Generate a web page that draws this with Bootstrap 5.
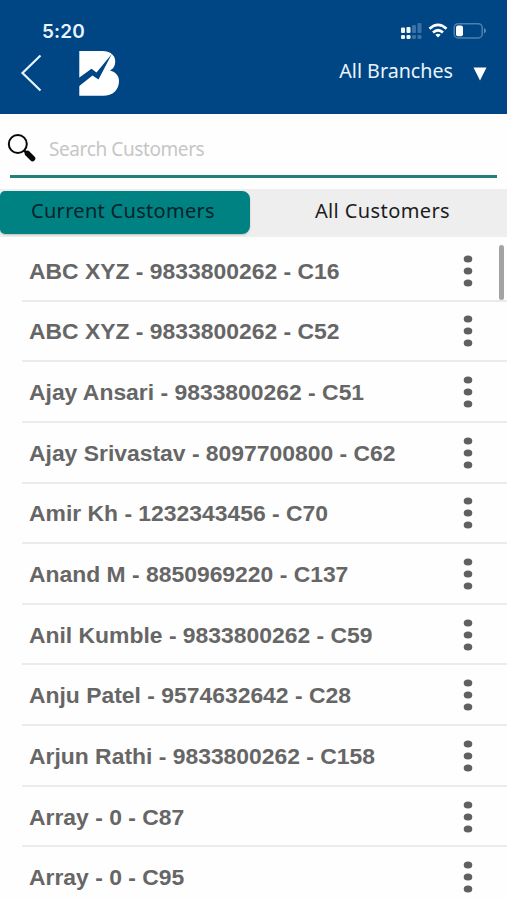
<!DOCTYPE html>
<html lang="en">
<head>
<meta charset="utf-8">
<meta name="viewport" content="width=device-width, initial-scale=1">
<title>Customers</title>
<link href="https://cdn.jsdelivr.net/npm/bootstrap@5.3.0/dist/css/bootstrap.min.css" rel="stylesheet">
<style>
body{font-family:"Noto Sans","Open Sans",sans-serif;background:#fefefe;height:900px;overflow:hidden}
svg{display:block;flex:none}
.app-header{background:#004584;height:114px;color:#e9f4fc}
.status-bar{height:48px;padding:16px 20px 0 42px}
.clock{font:600 19px/32px Inter,sans-serif;letter-spacing:.1px}
.signals{margin-top:5px}
.title-bar{height:50px;padding:0 20px 0 20px}
.logo{margin-left:36px}
.branches{font-size:19.7px;line-height:28px;margin-top:-4px}
.branches svg{margin-left:20px;margin-top:5px}
.search-row{height:64px;margin:0 10px;border-bottom:3px solid #22807a}
.search-row svg{margin:19px 0 0 -3px}
.search-hint{font-size:19px;letter-spacing:-.4px;line-height:28px;color:#c6c6c6;margin:21px 0 0 12px}
.tab-strip{background:#eee;height:48px;margin-top:11px;font-size:20px;line-height:28px;color:#1c1c1e}
.tab-strip .tab-item{height:43px;width:250px;padding-top:6px;margin-top:2px}
.tab-strip .tab-current{background:#008282;color:#06232b;border-radius:5px 8px 8px 5px;box-shadow:0 1px 2px rgba(0,0,0,.2);letter-spacing:.3px;padding-right:4px}
.tab-strip .tab-all{letter-spacing:.4px;padding-left:8px}
.customer-list{padding:4px 0 0 22px}
.customer{height:60.65px;border-bottom:2px solid #ebebeb;padding:1px 32px 0 7px;font:700 22.9px/28px "Liberation Sans",Arial,sans-serif;color:#666}
.scroll-thumb{position:absolute;right:3px;top:8px;width:5px;height:55px;border-radius:3px;background:#a3a3a3}
</style>
</head>
<body>
<svg width="0" height="0" class="position-absolute"><symbol id="kebab" viewBox="0 0 14 34"><g fill="#606060"><ellipse cx="7" cy="5" rx="4.3" ry="3.6"/><ellipse cx="7" cy="17" rx="4.3" ry="3.6"/><ellipse cx="7" cy="29" rx="4.3" ry="3.6"/></g></symbol></svg>
<header class="app-header">
  <div class="status-bar d-flex justify-content-between">
    <span class="clock">5:20</span>
    <svg class="signals" width="88" height="20" viewBox="399 21.500 88 20">
      <g fill="#f3faff"><rect x="401" y="28" width="4" height="5.500" rx="1"/><rect x="406.500" y="27.500" width="4" height="6" rx="1"/><rect x="401" y="35.500" width="4" height="4" rx="1.200"/><rect x="406.500" y="35.500" width="4" height="4" rx="1.200"/></g>
      <g fill="#3c71a5"><rect x="412" y="25.500" width="4" height="8" rx="1"/><rect x="417.500" y="23.500" width="4" height="10" rx="1"/><rect x="412" y="35.500" width="4" height="4" rx="1.200"/><rect x="417.500" y="35.500" width="4" height="4" rx="1.200"/></g>
      <g fill="none" stroke="#fff" stroke-width="2.700"><path d="M429.500 29.300Q438 21.500 446.500 29.300"/><path d="M433 33Q438 28.500 443 33"/></g><path d="M435.300 35.300Q438 33.300 440.700 35.300L438 38Z" fill="#fff"/>
      <rect x="454.200" y="24.200" width="28" height="14.300" rx="4" fill="none" stroke="#4d80b0" stroke-width="1.500"/><rect x="456" y="26" width="7" height="10.800" rx="2" fill="#fff"/><path d="M484 28.500Q488 31 484 34Z" fill="#5d8cb8"/>
    </svg>
  </div>
  <div class="title-bar d-flex align-items-center">
    <svg width="22" height="38" viewBox="0 0 22 38"><path d="M20.500 1.500 2.500 19 20.500 36.500" fill="none" stroke="#e9f4fc" stroke-width="2.200"/></svg>
    <svg class="logo" width="42" height="46" viewBox="0 0 42 46"><path d="M1.300 1H24C34 1 38.500 7 37 14Q36 18.500 32 20.500C38 22 41 26 41 31C41 40 35 45.700 25 45.700H1.300Z" fill="#fff"/><path d="M0 28.500 13.500 18.800 18.500 22.500 33.800 4 20.500 29.500 14.500 25.500 0 37Z" fill="#004584"/></svg>
    <div class="branches d-flex align-items-center ms-auto"><span>All Branches</span><svg width="14" height="14" viewBox="0 0 14 14"><path d="M.500 .500H13.500L7 13.500Z" fill="#fff"/></svg></div>
  </div>
</header>
<main>
  <div class="search-row d-flex align-items-start">
    <svg width="30" height="30" viewBox="0 0 30 30"><circle cx="10.800" cy="11" r="9" fill="none" stroke="#080808" stroke-width="2"/><path d="M17 17.500 21 21" stroke="#080808" stroke-width="2.500"/><path d="M20.500 20.500 25.500 25.500" stroke="#080808" stroke-width="5.500" stroke-linecap="round"/></svg>
    <span class="search-hint">Search Customers</span>
  </div>
  <div class="tab-strip d-flex">
    <div class="tab-item tab-current text-center">Current Customers</div>
    <div class="tab-item tab-all flex-grow-1 text-center">All Customers</div>
  </div>
  <div class="customer-list position-relative">
    <div class="customer d-flex align-items-center justify-content-between"><span>ABC XYZ - 9833800262 - C16</span><svg width="14" height="34"><use href="#kebab"/></svg></div>
    <div class="customer d-flex align-items-center justify-content-between"><span>ABC XYZ - 9833800262 - C52</span><svg width="14" height="34"><use href="#kebab"/></svg></div>
    <div class="customer d-flex align-items-center justify-content-between"><span>Ajay Ansari - 9833800262 - C51</span><svg width="14" height="34"><use href="#kebab"/></svg></div>
    <div class="customer d-flex align-items-center justify-content-between"><span>Ajay Srivastav - 8097700800 - C62</span><svg width="14" height="34"><use href="#kebab"/></svg></div>
    <div class="customer d-flex align-items-center justify-content-between"><span>Amir Kh - 1232343456 - C70</span><svg width="14" height="34"><use href="#kebab"/></svg></div>
    <div class="customer d-flex align-items-center justify-content-between"><span>Anand M - 8850969220 - C137</span><svg width="14" height="34"><use href="#kebab"/></svg></div>
    <div class="customer d-flex align-items-center justify-content-between"><span>Anil Kumble - 9833800262 - C59</span><svg width="14" height="34"><use href="#kebab"/></svg></div>
    <div class="customer d-flex align-items-center justify-content-between"><span>Anju Patel - 9574632642 - C28</span><svg width="14" height="34"><use href="#kebab"/></svg></div>
    <div class="customer d-flex align-items-center justify-content-between"><span>Arjun Rathi - 9833800262 - C158</span><svg width="14" height="34"><use href="#kebab"/></svg></div>
    <div class="customer d-flex align-items-center justify-content-between"><span>Array - 0 - C87</span><svg width="14" height="34"><use href="#kebab"/></svg></div>
    <div class="customer d-flex align-items-center justify-content-between"><span>Array - 0 - C95</span><svg width="14" height="34"><use href="#kebab"/></svg></div>
    <div class="scroll-thumb"></div>
  </div>
</main>
<script src="https://cdn.jsdelivr.net/npm/bootstrap@5.3.0/dist/js/bootstrap.bundle.min.js"></script>
</body>
</html>
